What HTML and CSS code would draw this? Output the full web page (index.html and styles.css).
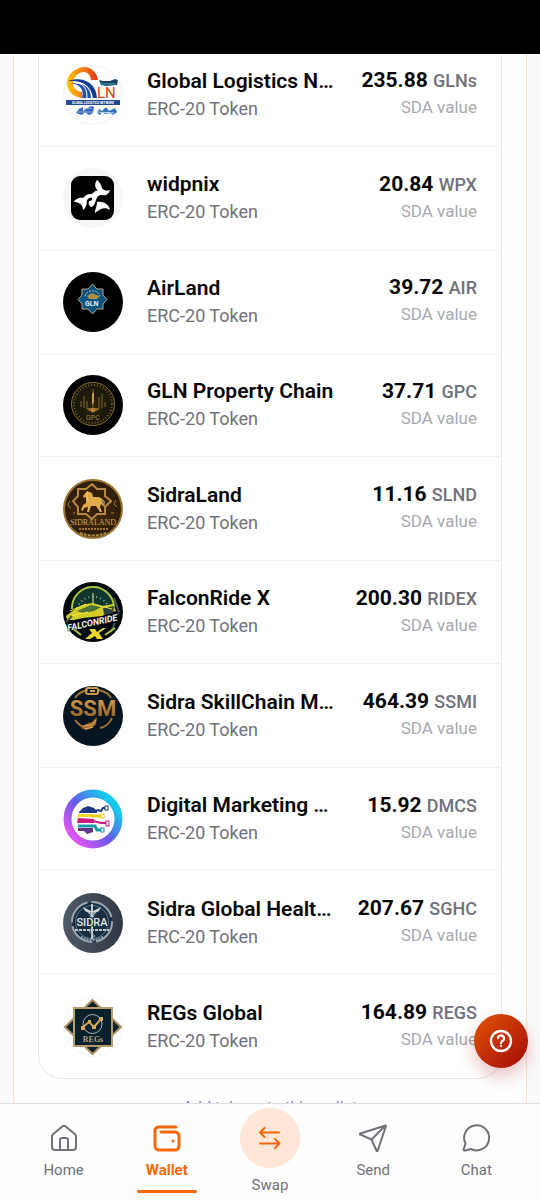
FILE: index.html
```html
<!DOCTYPE html>
<html lang="en">
<head>
<meta charset="utf-8">
<meta name="viewport" content="width=device-width, initial-scale=1">
<title>Wallet</title>
<link rel="stylesheet" href="styles.css">
</head>
<body>
<div class="app">
  <div class="status-bar"></div>
  <main class="content">
    <section class="panel">
      <ul class="tokens">
        <li class="token">
          <svg class="logo" viewBox="0 0 60 60" role="img" aria-label="Global Logistics Network">
            <defs><linearGradient id="gl" x1="0" y1="0" x2="1" y2="0"><stop offset="0" stop-color="#ffc400"/><stop offset=".55" stop-color="#f47a18"/><stop offset="1" stop-color="#df321e"/></linearGradient></defs>
            <circle cx="30" cy="30" r="29.5" fill="#fefefe" stroke="#f1f2f5"/>
            <path d="M19 33C9 32 4 25 4 18C4 9 12 3 21 2C29 2 34 8 35 15L28 15C27 9 24 7 20 7C14 8 10 13 10 18C10 23 13 26 19 27Z" fill="url(#gl)"/>
            <path d="M5 16C19 11 33 17 34 33L30 33C28 20 19 15 5 16Z" fill="#173d91"/>
            <path d="M8 18C21 17 28 23 28 33L19 33C21 25 18 20 8 18Z" fill="#2451ac"/>
            <path d="M12 18C22 18 24 25 24 33" fill="none" stroke="#fff" stroke-width="1"/>
            <path d="M36 15L40 16L47 16L52 14L55 15L54 20L43 21L38 20Z" fill="#174667"/><path d="M38 19H53" stroke="#4b9fba" stroke-width="1"/>
            <text x="34" y="33" class="t-ln">LN</text>
            <rect x="3" y="35" width="54" height="5" fill="#234894"/>
            <text x="30" y="39" class="t-network">GLOBAL LOGISTICS NETWORK</text>
            <path d="M13 48L16 44L20 42V46L28 41L31 42L30 48L26 50L22 47L19 50Z" fill="#3465b9"/><path d="M13 47H30M21 44L29 43" stroke="#8eabe0" stroke-width="1"/>
            <path d="M34 48L36 44L39 46L43 42L46 46L52 43L54 47L50 50L47 48L42 49L39 47L37 50Z" fill="#356fc0"/><path d="M34 47L51 48" stroke="#c1dcf5"/>
          </svg>
          <div class="info"><h2 class="name">Global Logistics N…</h2><p class="kind">ERC-20 Token</p></div>
          <div class="holding"><p class="amount">235.88 <span class="symbol">GLNs</span></p><p class="value">SDA value</p></div>
        </li>
        <li class="token">
          <svg class="logo" viewBox="0 0 60 60" role="img" aria-label="widpnix">
            <circle cx="30" cy="30" r="30" fill="#f6f6f6"/><rect x="8" y="8" width="43" height="44" rx="9" fill="#000"/>
            <path d="M34 12C31 16 32 20 35 23C31 22 30 27 27 26C24 26 22 28 20 30C17 29 12 31 11 34C15 34 20 36 20 42C23 40 24 36 24 32C26 29 29 29 29 30C30 32 28 33 26 33C25 36 26 38 28 39C31 39 32 35 33 32C34 28 36 27 39 27C43 28 46 26 47 22C44 23 41 23 39 20C38 17 37 14 34 12Z" fill="#fff"/>
            <path d="M34 34C40 33 46 36 47 42C42 39 38 40 32 45C32 41 34 39 34 34Z" fill="#fff"/>
          </svg>
          <div class="info"><h2 class="name">widpnix</h2><p class="kind">ERC-20 Token</p></div>
          <div class="holding"><p class="amount">20.84 <span class="symbol">WPX</span></p><p class="value">SDA value</p></div>
        </li>
        <li class="token">
          <svg class="logo" viewBox="0 0 60 60" role="img" aria-label="AirLand">
            <circle cx="30" cy="30" r="30" fill="#000"/>
            <path d="M29.500 12L34 17H40V23L44 27.500L40 32V37H34L29.500 42L25 37H19V32L15 27.500L19 23V17H25Z" fill="#0b5380" stroke="#bba782" stroke-width="1"/>
            <path d="M22 24A8 8 0 0 1 37 24" fill="none" stroke="#d1cab1" stroke-dasharray="2 1"/><path d="M24 24L27 22L30 21L33 23L37 24L34 27H26Z" fill="#a89140"/><text x="22" y="34" class="t-air">GLN</text>
          </svg>
          <div class="info"><h2 class="name">AirLand</h2><p class="kind">ERC-20 Token</p></div>
          <div class="holding"><p class="amount">39.72 <span class="symbol">AIR</span></p><p class="value">SDA value</p></div>
        </li>
        <li class="token">
          <svg class="logo" viewBox="0 0 60 60" role="img" aria-label="GLN Property Chain">
            <defs><radialGradient id="gp"><stop stop-color="#29230c"/><stop offset="1" stop-color="#16150c"/></radialGradient></defs>
            <circle cx="30" cy="30" r="30" fill="#000"/><circle cx="30" cy="29" r="21.500" fill="url(#gp)" stroke="#87702a" stroke-width="1"/><circle cx="30" cy="29" r="19" fill="none" stroke="#796324" stroke-width="2" stroke-dasharray="1 2"/>
            <path d="M18 32V26M21 33V21M24 33V26M36 33V22M39 33V19M42 32V27M30 14V32" stroke="#806b2a" stroke-width="1"/><path d="M29 19L31 17V27L29 30Z" fill="#c8a13e"/><path d="M23 33H37L34 36H26Z" fill="#7e6423"/><circle cx="30" cy="35" r="2.500" fill="#bb8130"/>
            <text x="23" y="45" class="t-gpc">GPC</text>
          </svg>
          <div class="info"><h2 class="name">GLN Property Chain</h2><p class="kind">ERC-20 Token</p></div>
          <div class="holding"><p class="amount">37.71 <span class="symbol">GPC</span></p><p class="value">SDA value</p></div>
        </li>
        <li class="token">
          <svg class="logo" viewBox="0 0 60 60" role="img" aria-label="SidraLand">
            <defs><radialGradient id="sl"><stop stop-color="#4b2c0b"/><stop offset="1" stop-color="#2c1d09"/></radialGradient></defs>
            <circle cx="30" cy="30" r="29" fill="url(#sl)" stroke="#9b7333" stroke-width="2"/>
            <path d="M28 8L33 13H41V20L47 25L41 31V38H33L28 43L22 38H14V31L9 25L14 20V13H22Z" transform="translate(1 -3)" fill="#352006" stroke="#b58842" stroke-width="2"/>
            <path d="M20 17L24 12L29 14L30 18L36 18L39 21L41 28L38 25L37 28L39 33L37 33L33 27L28 27L26 33L24 33L25 28L21 29L20 32L18 31L20 26L23 24L23 18L21 19Z" fill="#e1aa4a"/><path d="M24 14L25 23M37 19L41 22V27" fill="none" stroke="#f2c570"/>
            <path d="M7 22C4 25 5 28 8 29M53 21L51 25L54 28M10 34H12M48 34H51" fill="none" stroke="#a77e36"/>
            <text x="30" y="46" class="t-sidraland">SIDRALAND</text><path d="M16 50H45" stroke="#a07631" stroke-width="2" stroke-dasharray="2 1"/><path d="M17 54Q30 59 43 54" fill="none" stroke="#b18b45" stroke-width="2" stroke-dasharray="3 1"/>
          </svg>
          <div class="info"><h2 class="name">SidraLand</h2><p class="kind">ERC-20 Token</p></div>
          <div class="holding"><p class="amount">11.16 <span class="symbol">SLND</span></p><p class="value">SDA value</p></div>
        </li>
        <li class="token">
          <svg class="logo" viewBox="0 0 60 60" role="img" aria-label="FalconRide X">
            <circle cx="30" cy="30" r="30" fill="#02090c"/><path d="M9 27A21 21 0 0 1 51 25" fill="#12332e" stroke="#a5c43a" stroke-width="2"/><path d="M14 26A17 17 0 0 1 46 26" fill="none" stroke="#78b9a1" stroke-width="2" stroke-dasharray="1 3"/>
            <path d="M30 22V11" stroke="#d9e59a" stroke-width="1"/><path d="M3 34C12 27 18 22 30 21L39 24L50 22L53 29L45 31L39 34L20 36L11 38L4 38Z" fill="#d3ce25"/><path d="M14 29L28 23L38 25L31 29L20 31Z" fill="#4c7039"/><path d="M40 26L51 24L50 31L41 33Z" fill="#33433b"/><path d="M8 34L25 30M34 23L49 27M7 29L23 22" stroke="#eeed48"/>
            <path d="M3 40L9 34M51 16L56 30M50 35L56 31M48 50L52 41" stroke="#455357" stroke-width="2"/><path d="M42 53L52 46M8 45L18 53" stroke="#a7c536" stroke-width="2"/>
            <text x="5" y="49" class="t-falcon" transform="rotate(-12 5 49)">FALCONRIDE</text><path d="M26 47H32L34 50L40 46H43L36 51L40 57H34L32 54L27 57H22L29 51Z" fill="#ecd729"/>
          </svg>
          <div class="info"><h2 class="name">FalconRide X</h2><p class="kind">ERC-20 Token</p></div>
          <div class="holding"><p class="amount">200.30 <span class="symbol">RIDEX</span></p><p class="value">SDA value</p></div>
        </li>
        <li class="token">
          <svg class="logo" viewBox="0 0 60 60" role="img" aria-label="Sidra SkillChain">
            <defs><linearGradient id="sg" x1="0" y1="0" x2="0" y2="1"><stop stop-color="#d8a14d"/><stop offset="1" stop-color="#8f6026"/></linearGradient></defs>
            <circle cx="30" cy="30" r="30" fill="#071520"/><path d="M12 12C15 7 20 5 25 4M35 4C41 5 46 8 48 12M12 34C15 38 19 41 23 42M37 42C42 41 47 37 49 32" fill="none" stroke="#a9742e" stroke-width="2"/>
            <rect x="23" y="2" width="12" height="6" rx="2" fill="none" stroke="#c9974c" stroke-width="2"/><path d="M27 5H32" fill="none" stroke="#d2a057" stroke-width="2"/><text x="30" y="30" class="t-ssm">SSM</text>
            <path d="M18 42L23 38L29 36L34 31L33 38L29 42L23 44Z" fill="#a46b28"/><path d="M20 40L29 39L33 34M22 43L30 41" fill="none" stroke="#ddb26b"/>
          </svg>
          <div class="info"><h2 class="name">Sidra SkillChain M…</h2><p class="kind">ERC-20 Token</p></div>
          <div class="holding"><p class="amount">464.39 <span class="symbol">SSMI</span></p><p class="value">SDA value</p></div>
        </li>
        <li class="token">
          <svg class="logo" viewBox="0 0 60 60" role="img" aria-label="Digital Marketing">
            <defs><linearGradient id="dm" x1=".1" y1=".85" x2=".85" y2=".15"><stop stop-color="#df55f4"/><stop offset=".48" stop-color="#655ae8"/><stop offset="1" stop-color="#14cbed"/></linearGradient></defs>
            <circle cx="30" cy="30" r="25.500" fill="#fff" stroke="url(#dm)" stroke-width="8"/>
            <path d="M16 23L20 19L25 17L31 19L34 22V24H16Z" fill="#203980"/><path d="M31 23L35 21L38 22L40 19H43" fill="none" stroke="#203980" stroke-width="2"/><rect x="42" y="17" width="3" height="4" fill="#fff" stroke="#203980" stroke-width="1"/>
            <path d="M15 25H30V28H16L14 30Z" fill="#f6da24"/><path d="M28 27H39" stroke="#f1c91a" stroke-width="3"/><rect x="38" y="25" width="3" height="4" fill="#fff" stroke="#efc923" stroke-width="1"/>
            <path d="M15 29L31 30V34H14Z" fill="#ce197c"/><path d="M30 32L38 34H44" fill="none" stroke="#ce197c" stroke-width="2"/><rect x="43" y="32" width="3" height="5" fill="#fff" stroke="#ce197c" stroke-width="1"/>
            <path d="M15 37H32L34 41H38" fill="none" stroke="#1599a9" stroke-width="3"/><rect x="38" y="39" width="3" height="4" fill="#fff" stroke="#188f9e" stroke-width="1"/><path d="M15 39H30V43L24 45L21 42H15Z" fill="#65358c"/>
          </svg>
          <div class="info"><h2 class="name">Digital Marketing …</h2><p class="kind">ERC-20 Token</p></div>
          <div class="holding"><p class="amount">15.92 <span class="symbol">DMCS</span></p><p class="value">SDA value</p></div>
        </li>
        <li class="token">
          <svg class="logo" viewBox="0 0 60 60" role="img" aria-label="Sidra Global Health">
            <defs><linearGradient id="sh"><stop stop-color="#505966"/><stop offset="1" stop-color="#303844"/></linearGradient></defs>
            <circle cx="30" cy="30" r="30" fill="url(#sh)"/><circle cx="29" cy="29" r="20" fill="#172d42" stroke="#9ba8b2" stroke-width="2" stroke-dasharray="27 4"/><circle cx="29" cy="29" r="16.500" fill="none" stroke="#63788a"/>
            <path d="M29 11V46" stroke="#c0c9ce" stroke-width="2"/><path d="M28 18L20 14L22 18L26 20L29 19L32 20L36 18L38 14L30 18" fill="#d0d5d6"/><path d="M25 20Q35 21 29 25M33 20Q23 21 29 25M29 36Q24 38 29 41Q34 43 29 45" fill="none" stroke="#a9b7c1"/>
            <text x="29" y="33" class="t-sidra">SIDRA</text><path d="M12 37H46" stroke="#bdc8ce" stroke-width="2" stroke-dasharray="3 1"/><path d="M18 44Q29 50 40 44" fill="none" stroke="#9caebb" stroke-width="2" stroke-dasharray="2 1"/>
          </svg>
          <div class="info"><h2 class="name">Sidra Global Healt…</h2><p class="kind">ERC-20 Token</p></div>
          <div class="holding"><p class="amount">207.67 <span class="symbol">SGHC</span></p><p class="value">SDA value</p></div>
        </li>
        <li class="token">
          <svg class="logo" viewBox="0 0 60 60" role="img" aria-label="REGs Global">
            <circle cx="30" cy="30" r="29.500" fill="#fff" stroke="#f3f5fa"/>
            <path d="M29.500 3L58 30L29.500 57L2 30Z" fill="#0b202d" stroke="#ab9161" stroke-width="2"/><rect x="11" y="11" width="38" height="38" fill="#081f2c" stroke="#b59d6e" stroke-width="2"/>
            <circle cx="29.500" cy="27" r="9.500" fill="none" stroke="#aab2b6" stroke-width="1"/><path d="M20 30L26 25L31 30L38 22" fill="none" stroke="#d5a54d" stroke-width="2"/><path d="M18 29h4v4h-4zM25 23h3v3h-3zM29 28h4v4h-4zM36 20h4v4h-4z" fill="#d6a95a"/>
            <text x="30" y="45" class="t-regs">REGs</text>
          </svg>
          <div class="info"><h2 class="name">REGs Global</h2><p class="kind">ERC-20 Token</p></div>
          <div class="holding"><p class="amount">164.89 <span class="symbol">REGS</span></p><p class="value">SDA value</p></div>
        </li>
      </ul>
      <p class="note">Add tokens to this wallet</p>
    </section>
  </main>
  <button class="help" type="button" aria-label="Help">
    <svg width="24" height="24" viewBox="0 0 24 24" fill="none" stroke="#fff" stroke-width="2.300" stroke-linecap="round" stroke-linejoin="round"><circle cx="12" cy="12" r="10"/><path d="M9 9a3 3 0 0 1 6 1c0 2-3 2-3 4M12 17h.01"/></svg>
  </button>
  <nav class="tabs" aria-label="Main">
    <a class="tab" href="#home"><svg class="icon" viewBox="0 0 28 28"><path d="M2 12.500a3 3 0 0 1 1-2.200l9-7.600a3 3 0 0 1 4 0l9 7.600a3 3 0 0 1 1 2.200V23a3 3 0 0 1-3 3H5a3 3 0 0 1-3-3zM10 26V16a2 2 0 0 1 2-2h4a2 2 0 0 1 2 2v10"/></svg><span>Home</span></a>
    <a class="tab active" href="#wallet" aria-current="page"><svg class="icon" viewBox="0 0 28 28"><path d="M23 3H5.500A3.500 3.500 0 0 0 2 6.500V22a4 4 0 0 0 4 4h16a4 4 0 0 0 4-4V12a4 4 0 0 0-4-4H8M20 17h.01"/></svg><span>Wallet</span></a>
    <a class="tab swap" href="#swap"><span class="bubble"><svg class="icon" viewBox="0 0 28 28"><path d="M23 8.500H4.500M8.500 4L4 8.500 8.500 13M4 19.500h19M19 15l4.500 4.500L19 24"/></svg></span><span>Swap</span></a>
    <a class="tab" href="#send"><svg class="icon" viewBox="0 0 28 28"><path d="M26.500 1.500L1.500 9.500a.6.6 0 0 0 0 1.200L12.500 15.500l5 11a.6.6 0 0 0 1.200 0L27 2a.5.5 0 0 0-.5-.5zM12.500 15.500L26.500 1.500"/></svg><span>Send</span></a>
    <a class="tab" href="#chat"><svg class="icon" viewBox="0 0 28 28"><path d="M3.500 19.500A12.500 12.500 0 1 1 9 25L3 26.500a1 1 0 0 1-1.300-1.300z"/></svg><span>Chat</span></a>
  </nav>
</div>
</body>
</html>
```
FILE: styles.css
```css
* { box-sizing: border-box; }
body { margin: 0; font-family: Roboto, "Liberation Sans", sans-serif; color: #060608; background: #fafafa; }
h2, p, ul { margin: 0; padding: 0; }
.app { height: 100vh; display: flex; flex-direction: column; position: relative; overflow: hidden; }
.status-bar { flex: none; height: 54px; background: #000; }
.content { flex: 1; min-height: 0; overflow: hidden; padding: 0 13px; background: #fafafb; }
.panel { padding: 0 24px; background: #fefefe; border: solid #fbe2cd; border-width: 0 1px; }
.tokens { list-style: none; border: 1px solid #e9e9ec; border-top: 0; border-radius: 0 0 24px 24px; background: #fff; }
.token { display: flex; align-items: center; height: 104px; padding: 0 24px; border-bottom: 1px solid #f1f1f3; }
.token:nth-child(even) { height: 103px; }
.token:first-child { height: 93px; padding-bottom: 11px; }
.token:last-child { height: 103px; border-bottom: 0; }
.logo { flex: none; width: 60px; height: 60px; margin-right: 24px; }
.info { flex: 1; min-width: 0; }
.name { font-size: 21px; line-height: 28px; font-weight: 600; white-space: nowrap; overflow: hidden; text-overflow: ellipsis; }
.kind { font-size: 18px; line-height: 28px; color: #71717a; }
.holding { flex: none; margin-left: 16px; text-align: right; white-space: nowrap; }
.amount { font-size: 21px; line-height: 28px; font-weight: 700; }
.symbol { font-size: 18px; font-weight: 500; color: #71717a; }
.value { padding-bottom: 4px; font-size: 17px; line-height: 24px; color: #a9a9af; }
.note { padding-top: 17px; text-align: center; font-size: 16px; line-height: 24px; color: #8585b0; }
.tabs { flex: none; display: grid; grid-template-columns: repeat(5, 1fr); height: 97px; padding: 0 12px; background: #fdfdfd; border-top: 1px solid #dedee2; }
.tab { display: flex; flex-direction: column; align-items: center; gap: 7px; padding-top: 20px; color: #71717a; text-decoration: none; font-size: 15px; line-height: 22px; }
.icon { flex: none; width: 28px; height: 28px; fill: none; stroke: currentColor; stroke-width: 2; stroke-linecap: round; stroke-linejoin: round; }
.active { color: #f76707; font-weight: 700; }
.active::after { content: ""; width: 60px; height: 3px; margin-top: 2px; border-radius: 2px; background: currentColor; }
.active .icon { stroke-width: 3; }
.swap { padding-top: 4px; gap: 6px; }
.bubble { display: grid; place-items: center; width: 60px; height: 60px; border-radius: 50%; color: #f76707; background: #ffe6d7; }
.help { position: absolute; right: 12px; bottom: 132px; width: 54px; height: 54px; display: grid; place-items: center; padding: 0; border: 0; border-radius: 50%; background: linear-gradient(135deg, #e25505, #a20908); box-shadow: 0 8px 18px #a2090840; }
.t-ln { font: 15px Roboto, sans-serif; fill: #dd3c2c; }
.t-network { font: 700 3px Roboto, sans-serif; fill: #fff; text-anchor: middle; }
.t-air { font: 700 7px Roboto, sans-serif; fill: #e3ece8; }
.t-gpc { font: 7px Roboto, sans-serif; fill: #a08334; }
.t-sidraland { font: 8px "Liberation Serif", serif; fill: #d5a552; text-anchor: middle; }
.t-falcon { font: italic 700 9px Roboto, sans-serif; fill: #f2f6ee; stroke: #02090c; stroke-width: 1; paint-order: stroke; }
.t-ssm { font: 700 22px Roboto, sans-serif; fill: url(#sg); text-anchor: middle; }
.t-sidra { font: 500 11px Roboto, sans-serif; fill: #e3e8ea; stroke: #172d42; stroke-width: 2; paint-order: stroke; text-anchor: middle; }
.t-regs { font: 700 8px "Liberation Serif", serif; fill: #b9a176; text-anchor: middle; }
```
